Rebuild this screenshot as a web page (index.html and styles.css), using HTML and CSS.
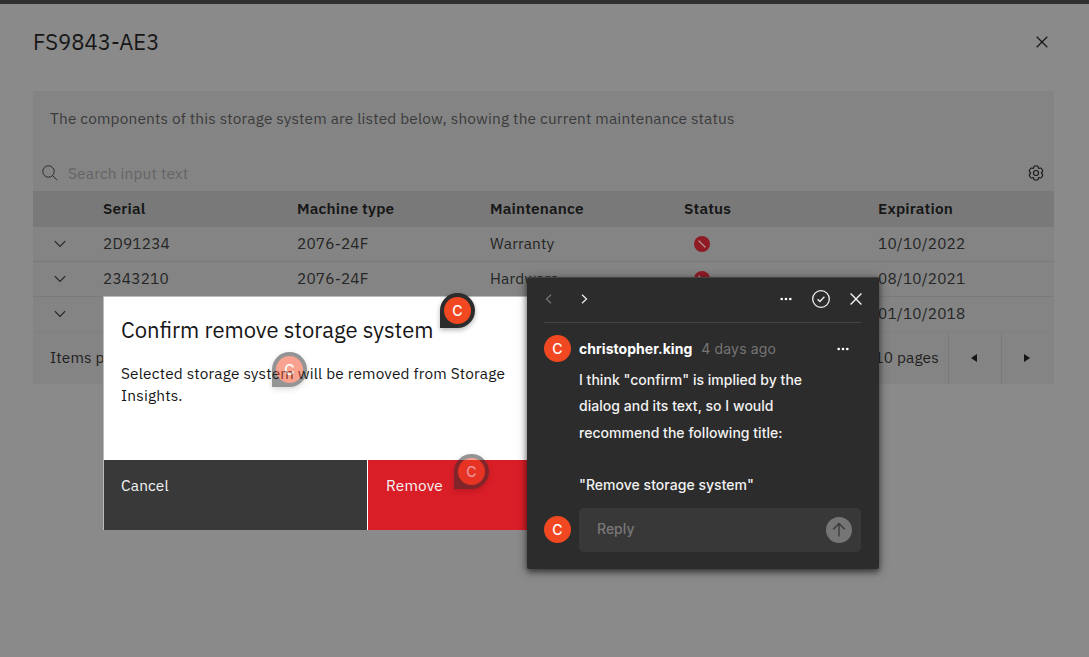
FILE: index.html
```html
<!DOCTYPE html>
<html lang="en">
<head>
<meta charset="utf-8">
<title>FS9843-AE3</title>
<link rel="stylesheet" href="styles.css">
</head>
<body>
<main class="page">
  <header class="page-header">
    <h1 class="page-title">FS9843-AE3</h1>
    <svg class="close" viewBox="0 0 12 12"><path d="M.7.7l10.6 10.6M11.3.7L.7 11.3"/></svg>
  </header>
  <section class="panel">
    <p class="description">The components of this storage system are listed below, showing the current maintenance status</p>
    <div class="toolbar">
      <svg class="search-icon" viewBox="0 0 16 16"><circle cx="6.5" cy="6.5" r="5.7"/><path d="M10.6 10.6l4.7 4.7"/></svg>
      <span class="search-text">Search input text</span>
      <svg class="gear" viewBox="0 0 32 32"><path d="M27 16.76v-1.53l1.92-1.68A2 2 0 0 0 29.300 11l-2.36-4a2 2 0 0 0-2.370-.89l-2.430.82a11 11 0 0 0-1.310-.75l-.510-2.520A2 2 0 0 0 18.360 2h-4.720a2 2 0 0 0-1.960 1.640l-.510 2.520a11 11 0 0 0-1.300.75l-2.430-.82A2 2 0 0 0 5.060 7L2.700 11a2 2 0 0 0 .410 2.510L5 15.240v1.530l-1.890 1.680A2 2 0 0 0 2.700 21l2.360 4a2 2 0 0 0 2.380.91l2.430-.82a11 11 0 0 0 1.310.75l.510 2.520A2 2 0 0 0 13.640 30h4.720a2 2 0 0 0 1.960-1.640l.510-2.520a11 11 0 0 0 1.300-.75l2.430.82a2 2 0 0 0 2.380-.91l2.360-4a2 2 0 0 0-.410-2.510z"/><circle cx="16" cy="16" r="5"/></svg>
    </div>
    <div class="table">
      <div class="row head"><span></span><span>Serial</span><span>Machine type</span><span>Maintenance</span><span>Status</span><span>Expiration</span></div>
      <div class="row"><svg class="chevron" viewBox="0 0 12 8"><path d="M.8 1.200L6 6.400l5.200-5.200"/></svg><span>2D91234</span><span>2076-24F</span><span>Warranty</span><svg class="status" viewBox="0 0 16 16"><circle cx="8" cy="8" r="8"/><path d="M4.600 4.600l6.800 6.800"/></svg><span>10/10/2022</span></div>
      <div class="row"><svg class="chevron" viewBox="0 0 12 8"><path d="M.8 1.200L6 6.400l5.200-5.200"/></svg><span>2343210</span><span>2076-24F</span><span>Hardware</span><svg class="status" viewBox="0 0 16 16"><circle cx="8" cy="8" r="8"/><path d="M4.600 4.600l6.800 6.800"/></svg><span>08/10/2021</span></div>
      <div class="row last"><svg class="chevron" viewBox="0 0 12 8"><path d="M.8 1.200L6 6.400l5.200-5.200"/></svg><span></span><span></span><span></span><span></span><span>01/10/2018</span></div>
    </div>
    <footer class="pager">
      <span class="items">Items p</span>
      <span class="pages">10 pages</span>
      <span class="page-button"><svg class="caret" viewBox="0 0 6 8"><path d="M6 0v8L0 4z"/></svg></span>
      <span class="page-button"><svg class="caret" viewBox="0 0 6 8"><path d="M0 0v8l6-4z"/></svg></span>
    </footer>
  </section>
</main>

<section class="modal">
  <div class="modal-body">
    <h2 class="modal-title">Confirm remove storage system</h2>
    <p class="modal-text">Selected storage system will be removed from Storage<br>Insights.</p>
  </div>
  <div class="modal-actions">
    <div class="button cancel">Cancel</div>
    <div class="button remove">Remove</div>
  </div>
</section>

<div class="pin pin-active"><span class="avatar">C</span></div>
<div class="pin pin-text"><span class="avatar">C</span></div>
<div class="pin pin-remove"><span class="avatar">C</span></div>

<aside class="comment">
  <div class="comment-bar">
    <svg class="nav dim" viewBox="0 0 7 10"><path d="M6 .8L1.500 5 6 9.200"/></svg>
    <svg class="nav" viewBox="0 0 7 10"><path d="M1 .8L5.500 5 1 9.200"/></svg>
    <svg class="dots bar-dots" viewBox="0 0 12 4"><circle cx="1.700" cy="2" r="1.350"/><circle cx="6" cy="2" r="1.350"/><circle cx="10.300" cy="2" r="1.350"/></svg>
    <svg class="resolve" viewBox="0 0 18 18"><circle cx="9" cy="9" r="8.300"/><path d="M5.600 9.300l2.300 2.200 4.500-4.700"/></svg>
    <svg class="dismiss" viewBox="0 0 12 12"><path d="M.6.6l10.800 10.800M11.400.6L.6 11.400"/></svg>
  </div>
  <div class="message">
    <span class="avatar">C</span>
    <div class="message-content">
      <div class="byline"><strong class="author">christopher.king</strong><span class="time">4 days ago</span>
        <svg class="dots" viewBox="0 0 12 4"><circle cx="1.700" cy="2" r="1.350"/><circle cx="6" cy="2" r="1.350"/><circle cx="10.300" cy="2" r="1.350"/></svg></div>
      <p class="message-text">I think "confirm" is implied by the<br>dialog and its text, so I would<br>recommend the following title:<br><br>"Remove storage system"</p>
    </div>
  </div>
  <div class="reply">
    <span class="avatar">C</span>
    <div class="reply-box"><span class="reply-label">Reply</span>
      <svg class="send" viewBox="0 0 26 26"><circle cx="13" cy="13" r="13"/><path d="M13 19.500V6.500M7.300 12.200L13 6.500l5.700 5.700"/></svg></div>
  </div>
</aside>
</body>
</html>
```

FILE: styles.css
```css
* { box-sizing: border-box; }
body { margin: 0; font-family: "IBM Plex Sans", "Noto Sans", sans-serif; font-size: 15.4px; letter-spacing: .176px; color: #161616; }
h1, h2, p { margin: 0; font-weight: 400; }
svg { display: block; fill: none; stroke: currentColor; overflow: visible; }
span { white-space: nowrap; }

.page { position: relative; width: 1089px; height: 657px; overflow: hidden; background: #8a8a8a; border-top: 4px solid #303030; padding: 0 35px 0 33px; }
.page-header { height: 87px; display: flex; justify-content: space-between; padding-top: 21px; }
.page-title { font-size: 22px; line-height: 33px; letter-spacing: 0; }
.close { width: 12px; height: 12px; margin: 10.500px 6px 0 0; stroke-width: 1.250; }

.panel { width: 1020.500px; background: #848484; }
.description { height: 64px; padding: 16px 0 0 17px; line-height: 22px; color: #3b3b3b; }
.toolbar { height: 36px; display: flex; align-items: center; padding: 0 10px 0 9px; }
.search-icon { width: 16px; height: 16px; color: #2b2b2b; stroke-width: 1; margin-bottom: 1px; }
.search-text { margin-left: 10px; color: #646464; }
.gear { width: 16px; height: 16px; margin: 0 0 1px auto; stroke-width: 2.200; }

.row { display: grid; grid-template-columns: 70px 194px 193px 194px 194px 1fr; height: 35px; line-height: 22px; align-items: center; border-bottom: 1px solid #7a7a7a; color: #252525; }
.row span { padding-bottom: 2px; }
.row.last { border-bottom-color: #808080; }
.row.head { height: 36px; background: #797979; font-weight: 600; color: #161616; }
.chevron { width: 12px; height: 8px; margin-left: 20.500px; stroke-width: 1.200; }
.status { width: 16px; height: 16px; margin-left: 10px; stroke: #b9a0a2; stroke-width: 1.300; }
.status circle { fill: #8f1c25; stroke: none; }

.pager { display: flex; height: 52px; align-items: stretch; line-height: 50px; color: #202020; }
.items { padding-left: 17px; }
.pages { margin-left: auto; padding-right: 9px; }
.page-button { display: flex; align-items: center; justify-content: center; width: 52.800px; padding-right: 1.500px; border-left: 1px solid #7a7a7a; }
.caret { width: 6px; height: 8px; fill: #161616; stroke: none; }

.modal { position: absolute; left: 103px; top: 296px; width: 529px; height: 234px; display: flex; flex-direction: column; background: #fff; border: 1px solid #bbb; border-right: 0; border-bottom: 0; }
.modal-body { flex: 1; padding: 17px 17px 0; }
.modal-title { font-size: 22px; line-height: 32px; letter-spacing: 0; }
.modal-text { padding-top: 16px; line-height: 22px; }
.modal-actions { display: grid; grid-template-columns: 263px 264px; gap: 1px; height: 70px; }
.button { padding: 14px 0 0 17px; line-height: 22px; color: #f4f4f4; }
.cancel { background: #393939; }
.remove { background: #da1e28; padding-left: 18px; }

.avatar { display: flex; flex: none; align-items: center; justify-content: center; width: 27px; height: 27px; border-radius: 50%; background: #f24822; color: #fff; font: 500 14px/27px Inter, sans-serif; letter-spacing: 0; }
.pin { position: absolute; width: 35px; height: 35px; padding: 4px; border-radius: 50% 50% 50% 0; background: #2c2c2c; box-shadow: 0 2px 5px rgba(0,0,0,.3); }
.pin-active { left: 440px; top: 293px; }
.pin-text { left: 272px; top: 352px; opacity: .5; }
.pin-remove { left: 454px; top: 453.500px; opacity: .5; }

.comment { position: absolute; left: 527px; top: 277px; width: 352px; height: 292px; padding: 0 18px 0 17px; border-radius: 2px; background: #2c2c2c; color: #f2f2f2; box-shadow: 0 2px 10px rgba(0,0,0,.5), 0 3px 5px rgba(0,0,0,.3), inset 0 1px #444; font-family: Inter, sans-serif; font-size: 14px; letter-spacing: 0; }
.comment-bar { display: flex; align-items: center; height: 46px; padding-bottom: 1px; border-bottom: 1px solid #444; }
.nav { width: 7px; height: 10px; margin: 0 28px 0 1px; stroke-width: 1.200; }
.dim { color: #777; }
.dots { width: 12px; height: 4px; fill: #fff; stroke: none; }
.bar-dots { margin-left: auto; }
.resolve { width: 18px; height: 18px; margin: 0 20px 0 20px; stroke-width: 1.300; }
.dismiss { width: 12px; height: 12px; margin-right: -1px; stroke-width: 1.400; }
.message { display: flex; gap: 8px; padding-top: 12px; }
.message-content { flex: 1; }
.byline { display: flex; align-items: center; height: 27px; padding-right: 12px; }
.author { font-weight: 700; color: #fff; letter-spacing: .03px; }
.time { margin-left: 9px; color: #757575; letter-spacing: .15px; }
.byline .dots { margin-left: auto; }
.message-text { font-weight: 500; line-height: 26.300px; padding-top: 5px; white-space: nowrap; letter-spacing: .03px; }
.reply { display: flex; align-items: center; gap: 8px; margin-top: 9.500px; }
.reply-box { display: flex; align-items: center; justify-content: space-between; flex: 1; height: 44px; padding: 0 9px 0 18px; border-radius: 5px; background: #383838; color: #777; font-weight: 500; }
.reply-label { padding-bottom: 2px; }
.send { width: 26px; height: 26px; stroke: #383838; stroke-width: 1.300; }
.send circle { fill: #757575; stroke: none; }
```
